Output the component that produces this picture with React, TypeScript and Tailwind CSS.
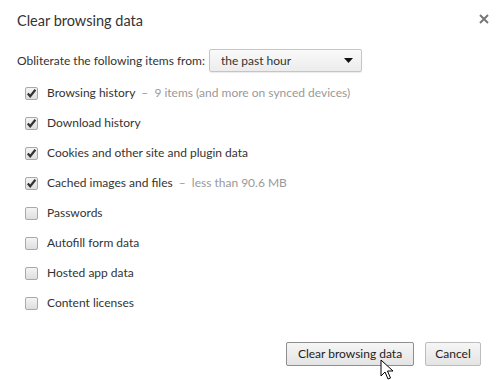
import { useState } from 'react'

type Item = {
  label: string
  note?: string
  checked: boolean
}

const items: Item[] = [
  { label: 'Browsing history', note: '9 items (and more on synced devices)', checked: true },
  { label: 'Download history', checked: true },
  { label: 'Cookies and other site and plugin data', checked: true },
  { label: 'Cached images and files', note: 'less than 90.6 MB', checked: true },
  { label: 'Passwords', checked: false },
  { label: 'Autofill form data', checked: false },
  { label: 'Hosted app data', checked: false },
  { label: 'Content licenses', checked: false },
]

const Checkbox = ({ checked }: { checked: boolean }) => (
  <span className="flex h-[13px] w-[13px] shrink-0 items-center justify-center rounded-[2px] border border-[#a9a9a9] bg-gradient-to-b from-[#f4f4f4] to-[#dedede]">
    {checked && (
      <svg width="11" height="11" viewBox="0 0 11 11">
        <path d="M1.8 5.6 L4.2 8.2 L9.4 1.8" fill="none" stroke="#333" strokeWidth="2.2" />
      </svg>
    )}
  </span>
)

export default function App() {
  const [rows, setRows] = useState(items)

  return (
    <div className="relative h-[380px] w-[500px] bg-white text-[12px] text-[#333] [font-family:Lato,sans-serif]">
      <div className="flex items-start justify-between pl-[17px] pr-[8px] pt-[11px]">
        <h1 className="text-[14.5px] leading-[20px] text-[#333]">Clear browsing data</h1>
        <svg width="10" height="10" viewBox="0 0 10 10" className="mt-[3px] mr-[3px]">
          <path d="M1 1 L9 9 M9 1 L1 9" stroke="#777" strokeWidth="2" />
        </svg>
      </div>

      <div className="mt-[18px] flex items-center pl-[17px]">
        <span>Obliterate the following items from:</span>
        <div className="ml-[4px] flex h-[23px] w-[153px] items-center justify-between rounded-[2px] border border-[#c5c5c5] bg-gradient-to-b from-[#fafafa] to-[#ececec] pl-[11px] pr-[8px] shadow-[0_1px_1px_rgba(0,0,0,0.08)]">
          <span>the past hour</span>
          <svg width="9" height="5" viewBox="0 0 9 5">
            <path d="M0 0 H9 L4.5 5 Z" fill="#111" />
          </svg>
        </div>
      </div>

      <div className="mt-[6px] flex flex-col pl-[25px]">
        {rows.map((row, i) => (
          <label
            key={row.label}
            className="flex h-[30px] cursor-default items-center"
            onClick={() => setRows((r) => r.map((x, j) => (j === i ? { ...x, checked: !x.checked } : x)))}
          >
            <Checkbox checked={row.checked} />
            <span className="ml-[9px]">{row.label}</span>
            {row.note && <span className="ml-[6px] text-[#999]">–&nbsp; {row.note}</span>}
          </label>
        ))}
      </div>

      <div className="absolute bottom-[14px] right-[19px] flex gap-[11px]">
        <button className="h-[24px] w-[128px] rounded-[2px] border border-[#8e8e8e] bg-gradient-to-b from-[#f6f6f6] to-[#e4e4e4] text-[#222]">
          Clear browsing data
        </button>
        <button className="h-[24px] w-[56px] rounded-[2px] border border-[#bcbcbc] bg-gradient-to-b from-[#f6f6f6] to-[#e4e4e4] text-[#222]">
          Cancel
        </button>
      </div>

      <svg width="14" height="22" viewBox="0 0 14 22" className="absolute left-[380px] top-[359px]">
        <path d="M1 1 V17 L5 13 L8 20 L10.5 19 L7.5 12 H13 Z" fill="#fff" stroke="#000" strokeWidth="1" />
      </svg>
    </div>
  )
}
